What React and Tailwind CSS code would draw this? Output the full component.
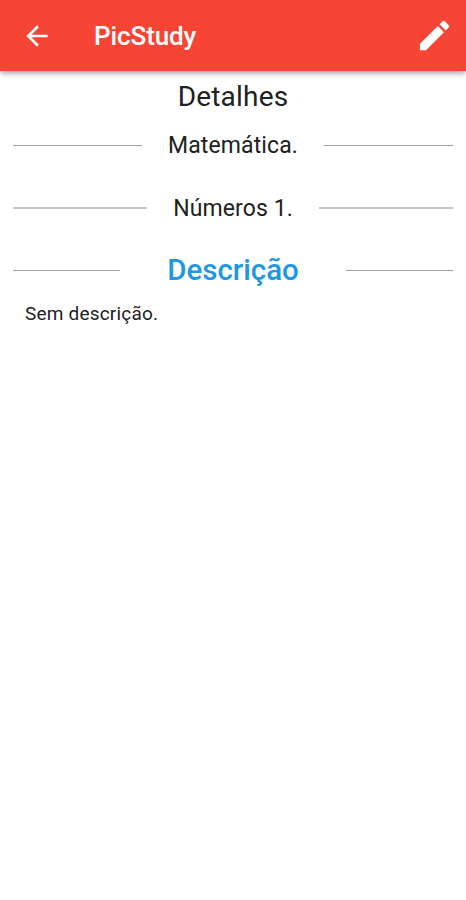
import { MdArrowBack, MdEdit } from 'react-icons/md';

const Divider = ({ label, className, line = 'h-px bg-[#9e9e9e]' }) => {
  return (
    <div className="flex items-center px-[13px]">
      <span className={`flex-1 ${line}`} />
      <span className={`text-center whitespace-nowrap ${className}`}>{label}</span>
      <span className={`flex-1 ${line}`} />
    </div>
  );
};

const App = () => {
  return (
    <div className="min-h-screen bg-white font-['Roboto',sans-serif] text-[#212121]">
      <header className="h-[71px] bg-[#f64435] text-white flex items-center pl-[21px] pr-3 pt-px shadow-[0_2px_6px_rgba(0,0,0,0.4)]">
        <button aria-label="Voltar">
          <MdArrowBack size={32} />
        </button>
        <h1 className="ml-[41px] pt-px text-[26px] tracking-[-0.1px] font-medium flex-1">PicStudy</h1>
        <button aria-label="Editar" className="pb-px">
          <MdEdit size={39} />
        </button>
      </header>

      <main>
        <h2 className="mt-2 mb-3 h-9 leading-9 text-center text-[28px] tracking-[0.2px]">Detalhes</h2>
        <Divider label="Matemática." className="w-[182px] h-9 pt-px leading-9 text-[23px] tracking-[0.1px]" />
        <div className="mt-[27px]">
          <Divider
            label="Números 1."
            line="h-0.5 bg-[#c4c4c4]"
            className="w-[172px] h-9 pt-px leading-9 text-[23px] tracking-[0.1px]"
          />
        </div>
        <div className="mt-[26px]">
          <Divider label="Descrição" className="w-[226px] h-9 leading-9 text-[29.5px] font-medium text-[#2196e3]" />
        </div>
        <p className="mt-3 ml-[25px] text-[19px] leading-7 tracking-[0.2px]">Sem descrição.</p>
      </main>
    </div>
  );
};

export default App;
